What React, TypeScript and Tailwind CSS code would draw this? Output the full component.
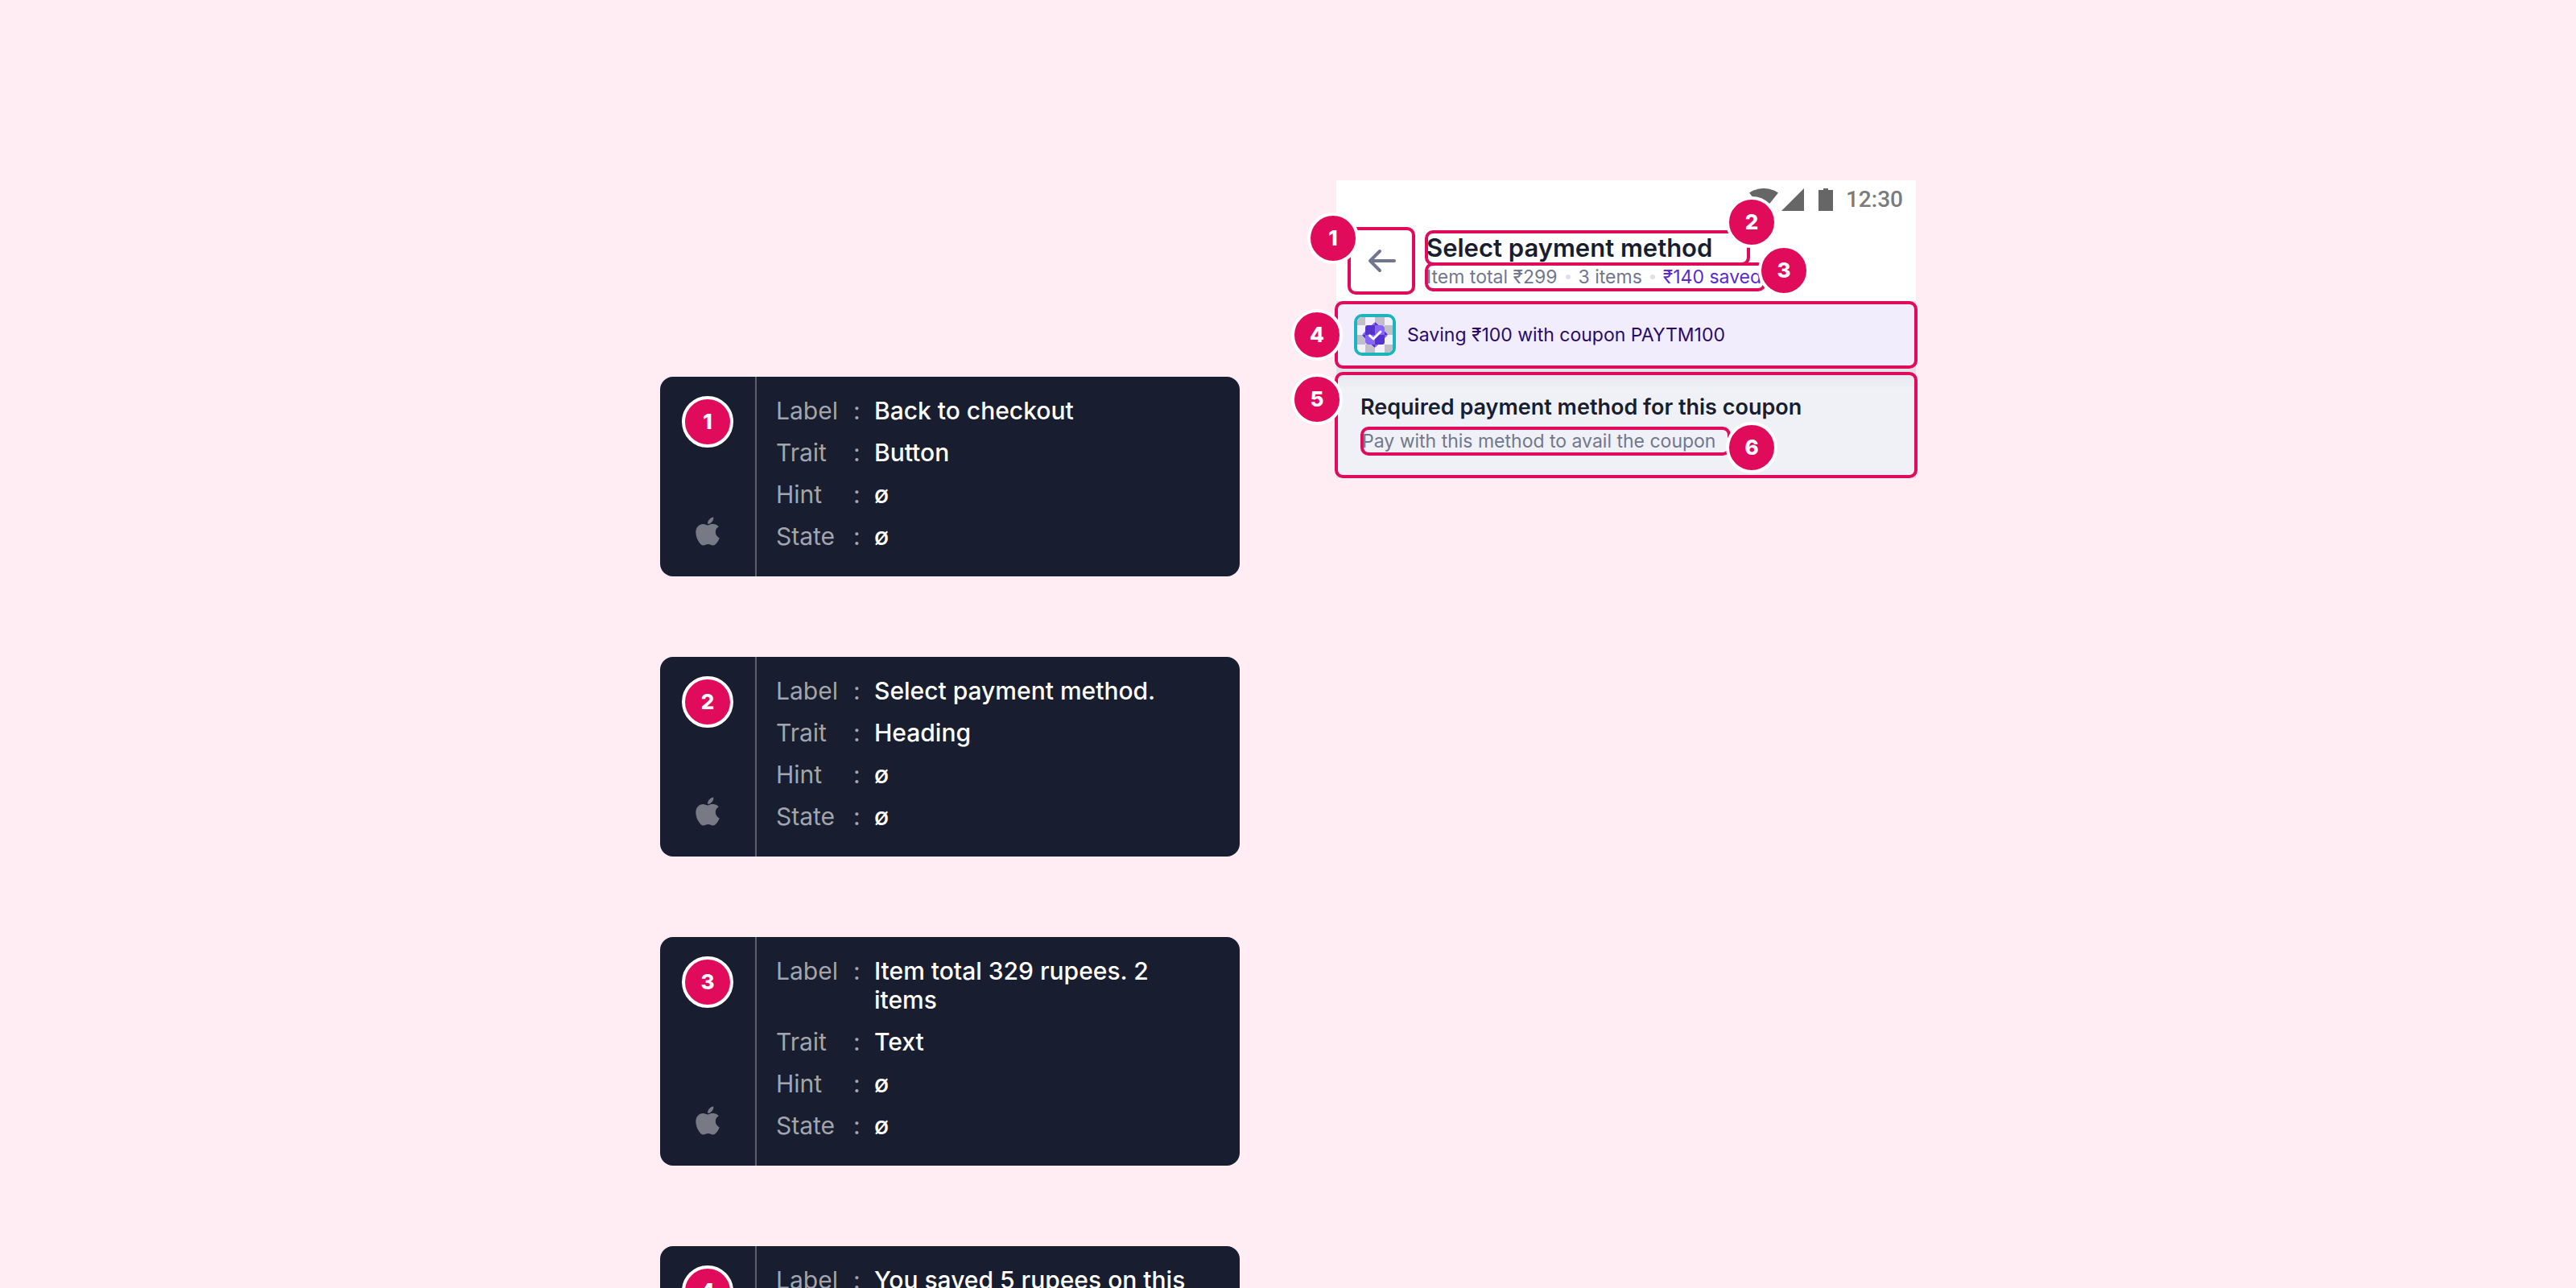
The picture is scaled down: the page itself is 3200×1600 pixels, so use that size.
import React from "react";
import { FaApple } from "react-icons/fa";

function Badge({ n, className = "" }: { n: number; className?: string }) {
  return (
    <span
      className={`flex size-16 items-center justify-center rounded-full border-4 border-white bg-[#e00b5b] text-[26px] leading-9 font-extrabold text-white ${className}`}
    >
      {n}
    </span>
  );
}

type Spec = { n: number; label: string; trait: string };

const specs: Spec[] = [
  { n: 1, label: "Back to checkout", trait: "Button" },
  { n: 2, label: "Select payment method.", trait: "Heading" },
  { n: 3, label: "Item total 329 rupees. 2 items", trait: "Text" },
  { n: 4, label: "You saved 5 rupees on this", trait: "Text" },
];

function SpecCard({ n, label, trait }: Spec) {
  const rows = [
    ["Label", label],
    ["Trait", trait],
    ["Hint", "ø"],
    ["State", "ø"],
  ];
  return (
    <article className="flex shrink-0 overflow-hidden rounded-2xl bg-[#181d2f]">
      <div className="flex w-30 shrink-0 flex-col items-center justify-between border-r-2 border-[#5d5e66] pt-6 pb-9">
        <Badge n={n} />
        <FaApple className="size-10 text-[#777a85]" aria-hidden="true" />
      </div>
      <dl className="flex min-w-0 flex-1 flex-col gap-4 px-6 pt-6 pb-8 text-[30px] leading-9">
        {rows.map(([name, value]) => (
          <div key={name} className="flex">
            <dt className="flex w-30 shrink-0 text-[#a3a5ac]">
              <span className="w-24">{name}</span>
              <span>:</span>
            </dt>
            <dd className="min-w-0 flex-1 pr-6 pl-0.5 font-medium text-white">{value}</dd>
          </div>
        ))}
      </dl>
    </article>
  );
}

function StatusIcons() {
  return (
    <svg className="h-7 w-26" viewBox="0 0 104 28" fill="#666666" aria-hidden="true">
      <path d="M18 28 36 5.6C35.3 5.1 28.4 0 18 0S.7 5.1 0 5.6L18 28Z" />
      <path d="M68 0v28H40Z" />
      <path d="M86 2h6V0h6v2h6v26H86Z" />
    </svg>
  );
}

const darkCells = [
  [0, 0, 10, 10],
  [22, 0, 12, 10],
  [10, 10, 12, 12],
  [34, 10, 10, 12],
  [0, 22, 10, 12],
  [22, 22, 12, 12],
  [10, 34, 12, 10],
  [34, 34, 10, 10],
];

function Cells({ fill }: { fill: string }) {
  return (
    <g fill={fill}>
      {darkCells.map(([x, y, w, h]) => (
        <rect key={`${x}-${y}`} x={x} y={y} width={w} height={h} />
      ))}
    </g>
  );
}

function CouponIcon() {
  return (
    <svg
      className="size-13 shrink-0 rounded-[10px] border-4 border-[#1ab5bf]"
      viewBox="0 0 44 44"
      aria-hidden="true"
    >
      <defs>
        <clipPath id="seal">
          <rect x="10" y="10" width="24" height="24" rx="4" />
          <rect x="10.5" y="10.5" width="23" height="23" rx="2" transform="rotate(45 22 22)" />
        </clipPath>
      </defs>
      <rect width="44" height="44" fill="#f3f0fb" />
      <Cells fill="#c2bfc9" />
      <g clipPath="url(#seal)">
        <rect width="44" height="44" fill="#8866fb" />
        <Cells fill="#5432cb" />
      </g>
      <path
        d="M15.5 22.8 20 27l9-9"
        fill="none"
        stroke="#ffffff"
        strokeWidth="3"
        strokeLinecap="round"
        strokeLinejoin="round"
      />
    </svg>
  );
}

const outline = "relative border-4 border-[#e00b5b]";

function Dot() {
  return <span className="mx-2.5 size-1.5 shrink-0 rounded-full bg-[#dfe1e9]" />;
}

export default function App() {
  return (
    <main className="flex h-screen justify-center gap-30 overflow-hidden bg-[#ffedf3] px-6 font-['Inter',sans-serif]">
      <section className="flex w-full max-w-180 flex-col gap-25 pt-117">
        {specs.map((s) => (
          <SpecCard key={s.n} {...s} />
        ))}
      </section>

      <section className="w-full max-w-180 pt-56">
        <header className="bg-white">
          <div className="flex h-12 items-center justify-end gap-4 pr-4">
            <StatusIcons />
            <span className="font-['Roboto',sans-serif] text-[28px] leading-9 font-medium text-[#7b7b7b]">
              12:30
            </span>
          </div>
          <div className="flex px-3.5 pt-2.5 pb-2">
            <div className="relative shrink-0">
              <button
                type="button"
                aria-label="Back to checkout"
                className="flex size-21 items-center justify-center rounded-[10px] border-4 border-[#e00b5b]"
              >
                <svg
                  className="h-8 w-9"
                  viewBox="0 0 36 32"
                  fill="none"
                  stroke="#6f768e"
                  strokeWidth="4"
                  strokeLinecap="round"
                  strokeLinejoin="round"
                  aria-hidden="true"
                >
                  <path d="M34 16H4M16 4 4 16l12 12" />
                </svg>
              </button>
              <Badge n={1} className="absolute -top-4.5 -left-12.5" />
            </div>
            <div className="ml-3 flex flex-col items-start pt-1">
              <div className={`${outline} h-11 w-101 rounded-[10px]`}>
                <h1 className="-ml-0.5 text-[31px] leading-9 font-semibold whitespace-nowrap text-[#181d2f]">
                  Select payment method
                </h1>
                <Badge n={2} className="absolute -top-11.5 -right-9.5" />
              </div>
              <div className={`${outline} -mt-1 h-9 w-106 rounded-[10px]`}>
                <p className="-ml-0.5 flex items-center text-[23px] leading-7 whitespace-nowrap text-[#71778e]">
                  Item total ₹299
                  <Dot />
                  3 items
                  <Dot />
                  <span className="text-[#5a2bd0]">₹140 saved</span>
                </p>
                <Badge n={3} className="absolute -top-6.5 -right-14.5" />
              </div>
            </div>
          </div>
        </header>

        <div className="bg-[#e0e2e8]">
          <div className={`${outline} -mx-0.5 flex h-21 items-center gap-3.5 rounded-[10px] bg-[#f1edfd] px-5`}>
            <CouponIcon />
            <p className="text-[23px] leading-7 text-[#2a0a6b]">Saving ₹100 with coupon PAYTM100</p>
            <Badge n={4} className="absolute top-1.5 -left-14.5" />
          </div>
          <div
            className={`${outline} -mx-0.5 mt-1 rounded-[10px] bg-[#f0f1f7] bg-linear-to-b from-[#e8eaef] to-[#f0f1f7] to-15% px-7 pt-5.5 pb-6`}
          >
            <h2 className="text-[27px] leading-9 font-semibold text-[#181d2f]">
              Required payment method for this coupon
            </h2>
            <div className={`${outline} mt-1.5 h-9 w-115 rounded-[10px]`}>
              <p className="-ml-0.5 text-[23px] leading-7 whitespace-nowrap text-[#71778e]">
                Pay with this method to avail the coupon
              </p>
              <Badge n={6} className="absolute -top-2.5 -right-15.5" />
            </div>
            <Badge n={5} className="absolute -top-0.5 -left-14.5" />
          </div>
        </div>
      </section>
    </main>
  );
}
